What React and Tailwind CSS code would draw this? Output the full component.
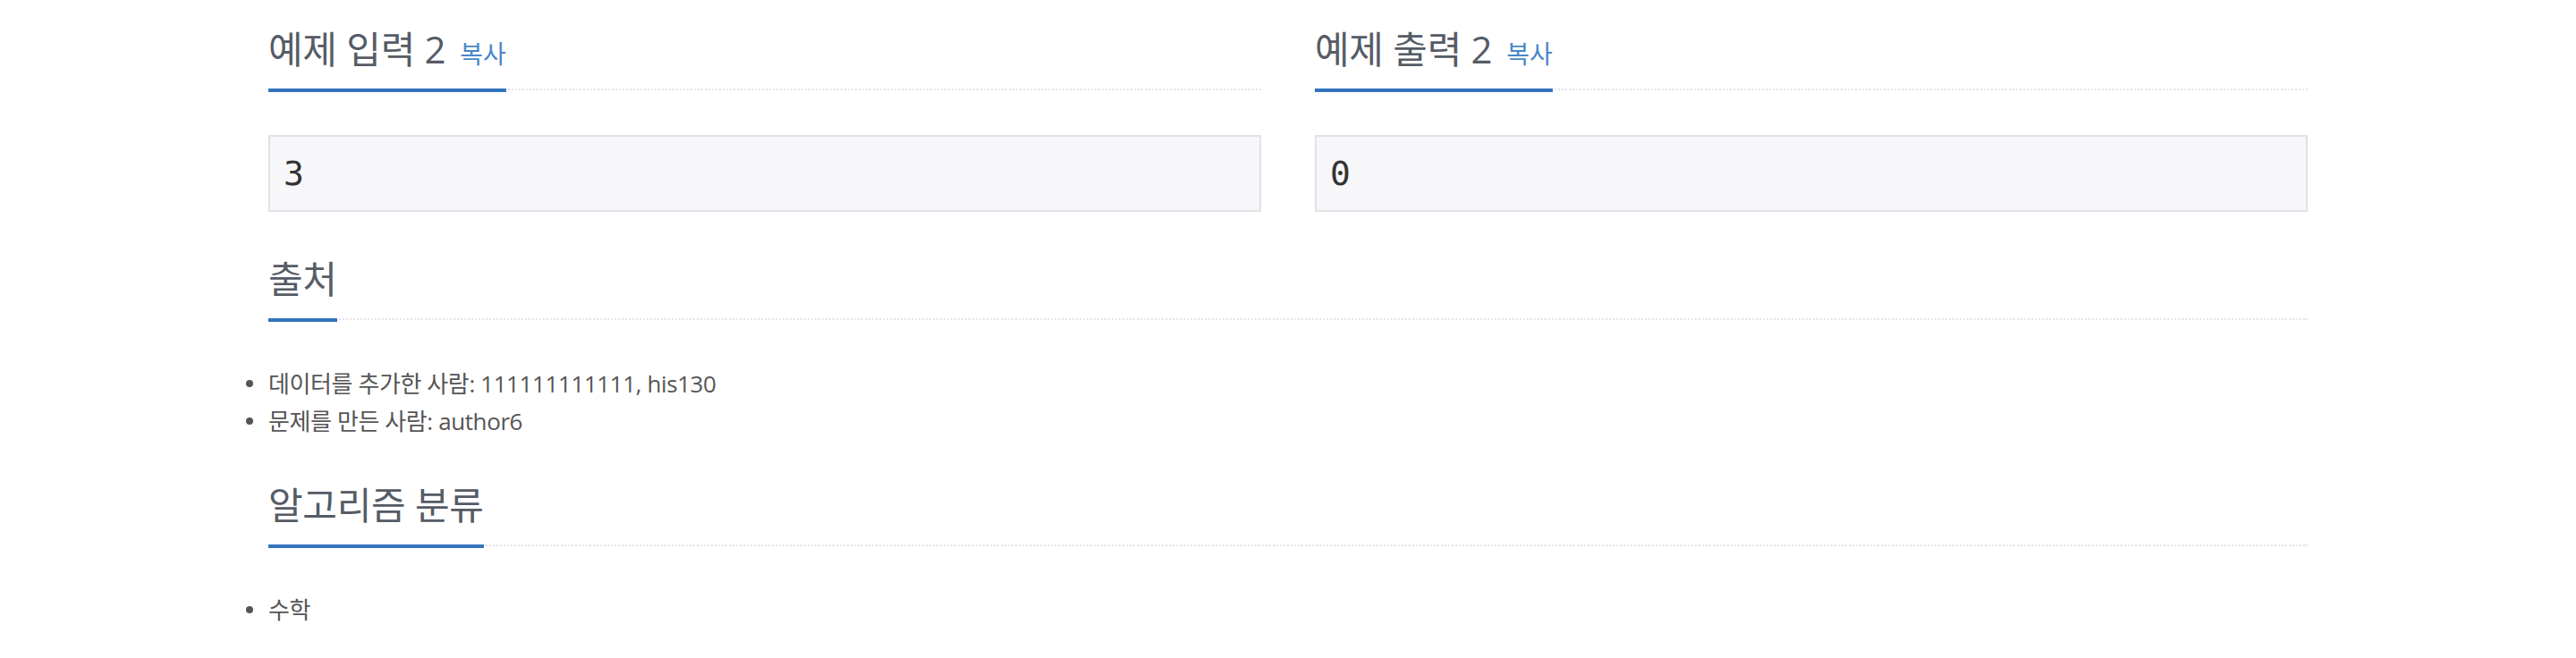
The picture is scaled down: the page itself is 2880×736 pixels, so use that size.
const SANS = { fontFamily: '"Open Sans", "Noto Sans CJK KR", sans-serif' }

function Headline({ title, copy }) {
  return (
    <div className="flex border-b-2 border-dotted border-[#e3e3ec]">
      <h2 className="mb-[-4px] border-b-4 border-[#3274bd] pb-[14px] text-[42px] leading-[60px] font-normal tracking-[-0.3px] text-[#555c66] whitespace-nowrap">
        {title}
        {copy && <span className="ml-[16px] text-[28px] leading-none tracking-normal text-[#4a86c8]">복사</span>}
      </h2>
    </div>
  )
}

function Sample({ title, value }) {
  return (
    <div>
      <Headline title={title} copy />
      <pre
        className="mt-[50px] border-2 border-[#e1e1e8] bg-[#f7f7f9] pl-[15px] py-[19px] text-[38px] leading-[44px] text-[#333]"
        style={{ fontFamily: '"DejaVu Sans Mono", monospace' }}
      >
        {value}
      </pre>
    </div>
  )
}

function Bullets({ items }) {
  return (
    <ul className="mt-[50px]">
      {items.map(t => (
        <li key={t} className="flex items-center text-[26px] leading-[42px] tracking-[-0.4px] text-[#555]">
          <span className="-ml-[25px] mr-[17px] h-[8px] w-[8px] rounded-full bg-[#555]" />
          {t}
        </li>
      ))}
    </ul>
  )
}

export default function App() {
  return (
    <div className="min-h-screen bg-white pt-[25px]" style={SANS}>
      <div className="mx-auto w-[2280px]">
        <div className="grid grid-cols-2 gap-x-[60px]">
          <Sample title="예제 입력 2" value="3" />
          <Sample title="예제 출력 2" value="0" />
        </div>

        <div className="mt-[45px]">
          <Headline title="출처" />
          <Bullets items={['데이터를 추가한 사람: 111111111111, his130', '문제를 만든 사람: author6']} />
        </div>

        <div className="mt-[43px]">
          <Headline title="알고리즘 분류" />
          <Bullets items={['수학']} />
        </div>
      </div>
    </div>
  )
}
